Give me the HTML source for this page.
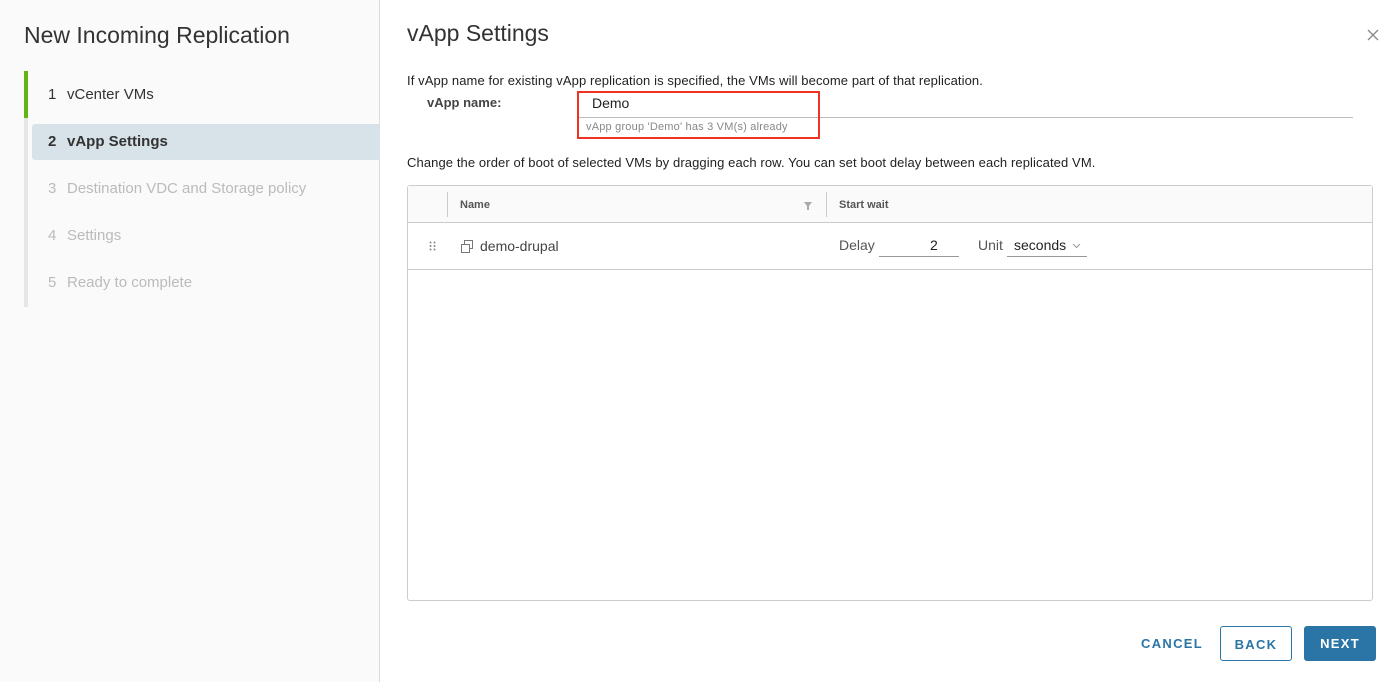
<!DOCTYPE html>
<html><head><style>
*{box-sizing:border-box;margin:0;padding:0}
body{width:1398px;height:682px;font-family:"Liberation Sans",sans-serif;background:#fff;position:relative;overflow:hidden;color:#333}
.side{position:absolute;left:0;top:0;width:380px;height:682px;background:#fafafa;border-right:1px solid #ddd}
.side h1{position:absolute;left:24px;top:22px;font-size:23px;font-weight:normal;color:#333}
.bar{position:absolute;left:24px;top:71px;width:4px;height:236px;background:#e6e6e6}
.bar i{position:absolute;left:0;top:0;width:4px;height:47px;background:#60b515}
.step{position:absolute;left:48px;font-size:15px;color:#333}
.step b{font-weight:normal;display:inline-block;width:19px}
.dim{color:#bbb}
.act{position:absolute;left:32px;top:124px;width:348px;height:36px;background:#d8e3e9;border-radius:3px 0 0 3px}
.abs{position:absolute}
.th{font-size:11px;font-weight:bold;color:#555}
.btn{position:absolute;top:626px;height:35px;font-size:13px;letter-spacing:1.3px;font-weight:bold;text-align:center;line-height:35px;border-radius:3px}
</style></head><body>
<div class="side">
<h1>New Incoming Replication</h1>
<div class="bar"><i></i></div>
<div class="act"></div>
<div class="step" style="top:86px"><b>1</b>vCenter VMs</div>
<div class="step" style="top:133px;font-weight:bold"><b style="font-weight:bold">2</b>vApp Settings</div>
<div class="step dim" style="top:180px"><b>3</b>Destination VDC and Storage policy</div>
<div class="step dim" style="top:227px"><b>4</b>Settings</div>
<div class="step dim" style="top:274px"><b>5</b>Ready to complete</div>
</div>
<div class="abs" style="left:407px;top:20px;font-size:23px;color:#333">vApp Settings</div>
<svg class="abs" style="left:1367px;top:29px" width="12" height="12"><path d="M1 1L11 11M11 1L1 11" stroke="#888" stroke-width="1.3"/></svg>
<div class="abs" style="left:407px;top:73px;font-size:13px;letter-spacing:0.1px;color:#222">If vApp name for existing vApp replication is specified, the VMs will become part of that replication.</div>
<div class="abs" style="left:427px;top:95px;font-size:13px;font-weight:bold;color:#444">vApp name:</div>
<div class="abs" style="left:578px;top:117px;width:775px;height:1px;background:#bbb"></div>
<div class="abs" style="left:577px;top:91px;width:243px;height:48px;border:2px solid #ee3322"></div>
<div class="abs" style="left:592px;top:95px;font-size:14px;color:#222">Demo</div>
<div class="abs" style="left:586px;top:121px;font-size:11px;letter-spacing:0.2px;color:#888">vApp group 'Demo' has 3 VM(s) already</div>
<div class="abs" style="left:407px;top:155px;font-size:13px;letter-spacing:0.1px;color:#222">Change the order of boot of selected VMs by dragging each row. You can set boot delay between each replicated VM.</div>
<div class="abs" style="left:407px;top:185px;width:966px;height:416px;border:1px solid #ccc;border-radius:3px">
<div class="abs" style="left:0;top:0;width:964px;height:37px;background:#fafafa;border-bottom:1px solid #ccc"></div>
<div class="abs" style="left:39px;top:6px;width:1px;height:25px;background:#ccc"></div>
<div class="abs" style="left:418px;top:6px;width:1px;height:25px;background:#ccc"></div>
<div class="abs th" style="left:52px;top:13px">Name</div>
<svg class="abs" style="left:396px;top:16px" width="8" height="8"><path d="M0 0H8L5 4V8H3V4Z" fill="#aaa"/></svg>
<div class="abs th" style="left:431px;top:13px">Start wait</div>
<div class="abs" style="left:0;top:83px;width:964px;height:1px;background:#ccc"></div>
<svg class="abs" style="left:21px;top:55px" width="8" height="10"><g fill="#888"><circle cx="1.5" cy="1.5" r="1"/><circle cx="5.5" cy="1.5" r="1"/><circle cx="1.5" cy="5" r="1"/><circle cx="5.5" cy="5" r="1"/><circle cx="1.5" cy="8.5" r="1"/><circle cx="5.5" cy="8.5" r="1"/></g></svg>
<svg class="abs" style="left:53px;top:54px" width="13" height="14"><rect x="3.5" y="0.5" width="8" height="8" fill="none" stroke="#777"/><rect x="0.5" y="4.5" width="8" height="8" fill="#fff" stroke="#777"/></svg>
<div class="abs" style="left:72px;top:52px;font-size:14px;color:#444">demo-drupal</div>
<div class="abs" style="left:431px;top:51px;font-size:14px;color:#555">Delay</div>
<div class="abs" style="left:471px;top:70px;width:80px;height:1px;background:#999"></div>
<div class="abs" style="left:522px;top:51px;font-size:14px;color:#222">2</div>
<div class="abs" style="left:570px;top:51px;font-size:14px;color:#555">Unit</div>
<div class="abs" style="left:599px;top:70px;width:80px;height:1px;background:#999"></div>
<div class="abs" style="left:606px;top:51px;font-size:14px;color:#222">seconds</div>
<svg class="abs" style="left:664px;top:57px" width="9" height="6"><path d="M1 1L4.5 4.5L8 1" fill="none" stroke="#999"/></svg>
</div>
<div class="btn" style="left:1136px;width:72px;color:#2a75a6;">CANCEL</div>
<div class="btn" style="left:1220px;width:72px;border:1px solid #2a75a6;color:#2a75a6">BACK</div>
<div class="btn" style="left:1304px;width:72px;background:#2a75a6;color:#fff">NEXT</div>
</body></html>
